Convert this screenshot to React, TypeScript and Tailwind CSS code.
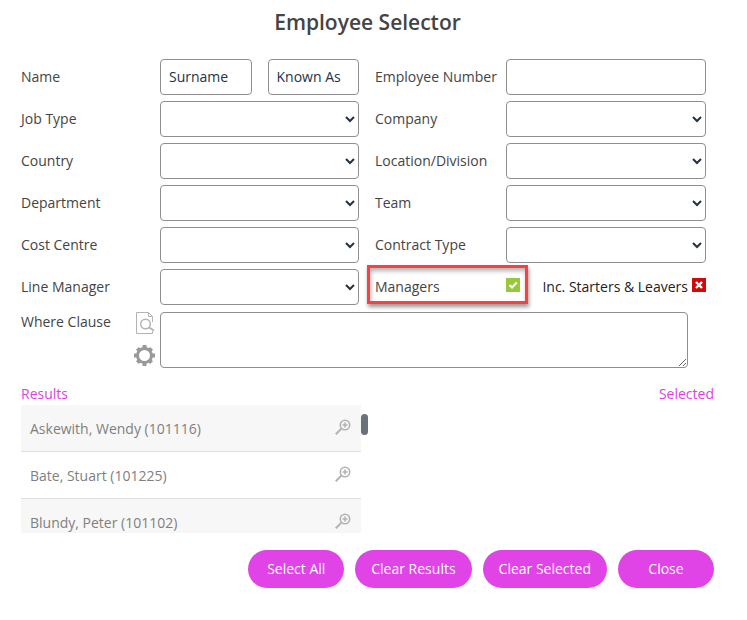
import { useState } from 'react';
import type { ReactNode } from 'react';

const FIELD = 'h-9 w-full min-w-0 rounded-[4px] border border-[#8f8f8f] bg-white text-[#26323f]';

const RESULTS = [
  'Askewith, Wendy (101116)',
  'Bate, Stuart (101225)',
  'Blundy, Peter (101102)',
];

const ACTIONS = ['Select All', 'Clear Results', 'Clear Selected', 'Close'];

function SelectField({ id, label, second }: { id: string; label: string; second?: boolean }) {
  return (
    <>
      <label htmlFor={id} className={second ? 'pl-4' : ''}>
        {label}
      </label>
      <select id={id} className={`${FIELD} px-[2px] pb-[2px]`}>
        <option value=""></option>
      </select>
    </>
  );
}

function Toggle({
  id,
  checked,
  onChange,
  className,
  children,
}: {
  id: string;
  checked: boolean;
  onChange: (value: boolean) => void;
  className: string;
  children: ReactNode;
}) {
  return (
    <span className="relative mb-1 flex size-[14px] shrink-0">
      <input
        id={id}
        type="checkbox"
        checked={checked}
        onChange={(e) => onChange(e.target.checked)}
        className={`size-[14px] appearance-none ${className}`}
      />
      <svg
        viewBox="0 0 14 14"
        className="pointer-events-none absolute inset-0 size-[14px]"
        fill="none"
        stroke="#fff"
        strokeWidth="2"
      >
        {children}
      </svg>
    </span>
  );
}

function DocumentSearchIcon() {
  return (
    <svg viewBox="0 0 20 22" className="h-[22px] w-5" fill="none" stroke="#b4b4b4">
      <path d="M12.5 .5H.5v21h16V19M12.5 .5l4 4V10M12.5 .5v4h4" />
      <circle cx="9.5" cy="12" r="4.8" strokeWidth="1.5" />
      <path d="M13 15.5l5 3" strokeWidth="2" />
    </svg>
  );
}

function GearIcon() {
  return (
    <svg viewBox="0 0 22 22" className="size-[22px]" fill="none" stroke="#999">
      <circle cx="10.5" cy="10.5" r="7" strokeWidth="3" />
      <g strokeWidth="4">
        <path d="M10.5 0v3.5M10.5 17.5V21M0 10.5h3.5M17.5 10.5H21" />
        <path d="M3.4 3.4l2.3 2.3M15.3 15.3l2.3 2.3M3.4 17.6l2.3-2.3M15.3 5.7l2.3-2.3" />
      </g>
    </svg>
  );
}

function ZoomIcon() {
  return (
    <svg viewBox="0 0 16 16" className="size-4" fill="none" stroke="#b3b3b3">
      <circle cx="10" cy="6" r="4.7" strokeWidth="1.6" />
      <path d="M10 3.5v5M7.5 6h5" strokeWidth="1.6" />
      <path d="M6.4 9.6L.8 15.2" strokeWidth="2" />
    </svg>
  );
}

export default function App() {
  const [managers, setManagers] = useState(true);
  const [leavers, setLeavers] = useState(false);

  return (
    <main className="bg-white pr-[33px] pl-[21px] font-['Open_Sans',sans-serif] text-sm text-[#444]">
      <h1 className="pt-[6px] pb-[21px] text-center text-[21px] leading-8 font-semibold text-[#444]">
        Employee Selector
      </h1>

      <form onSubmit={(e) => e.preventDefault()}>
        <div className="mr-2 grid grid-cols-[139px_199fr_147px_200fr] items-center gap-y-[6px]">
          <label htmlFor="surname">Name</label>
          <div className="flex gap-4">
            <input
              id="surname"
              placeholder="Surname"
              className={`${FIELD} px-2 pb-[2px] placeholder:text-[#26323f]`}
            />
            <input
              aria-label="Known As"
              placeholder="Known As"
              className={`${FIELD} px-2 pb-[2px] placeholder:text-[#26323f]`}
            />
          </div>
          <label htmlFor="number" className="pl-4">
            Employee Number
          </label>
          <input id="number" className={`${FIELD} px-2 pb-[2px]`} />

          <SelectField id="job" label="Job Type" />
          <SelectField id="company" label="Company" second />
          <SelectField id="country" label="Country" />
          <SelectField id="location" label="Location/Division" second />
          <SelectField id="department" label="Department" />
          <SelectField id="team" label="Team" second />
          <SelectField id="cost" label="Cost Centre" />
          <SelectField id="contract" label="Contract Type" second />
          <SelectField id="manager" label="Line Manager" />

          <div className="col-span-2 flex items-center justify-between pl-4">
            <div className="relative flex w-[145px] items-center justify-between">
              <label htmlFor="managers">Managers</label>
              <Toggle
                id="managers"
                checked={managers}
                onChange={setManagers}
                className="bg-[#97c93d]"
              >
                <path d="M3.5 7l2.5 2.5 4.8-5" />
              </Toggle>
              <span className="pointer-events-none absolute -inset-x-2 -top-3 h-[39px] border-[3px] border-[#f94144] shadow-[1px_3px_4px_rgba(0,0,0,0.4),inset_1px_3px_4px_rgba(0,0,0,0.3)]" />
            </div>
            <div className="flex items-center gap-1 text-[#222]">
              <label htmlFor="leavers">Inc. Starters &amp; Leavers</label>
              <Toggle
                id="leavers"
                checked={leavers}
                onChange={setLeavers}
                className="bg-[#cf0a0a]"
              >
                <path d="M4 4l6 6M10 4l-6 6" strokeWidth="2.4" />
              </Toggle>
            </div>
          </div>
        </div>

        <div className="mt-[7px] mr-[26px] grid grid-cols-[113px_26px_1fr]">
          <label htmlFor="where">Where Clause</label>
          <div className="flex flex-col gap-[11px]">
            <button type="button" aria-label="Preview clause" className="ml-[2px]">
              <DocumentSearchIcon />
            </button>
            <button type="button" aria-label="Clause settings">
              <GearIcon />
            </button>
          </div>
          <textarea id="where" className={`${FIELD} block h-14 p-2`} />
        </div>

        <div className="mt-4 flex justify-between text-[#de3fe3]">
          <h2>Results</h2>
          <h2>Selected</h2>
        </div>

        <div className="mt-px grid grid-cols-2">
          <div className="flex">
            <ul className="h-32 flex-1 overflow-hidden text-[#808080]">
              {RESULTS.map((name) => (
                <li
                  key={name}
                  className="flex h-[47px] items-center justify-between border-b border-[#e0e0e0] pt-[2px] pr-[10px] pl-[9px] odd:bg-[#f7f7f7]"
                >
                  {name}
                  <button type="button" aria-label={`View ${name}`} className="mb-1">
                    <ZoomIcon />
                  </button>
                </li>
              ))}
            </ul>
            <div className="mt-[9px] h-[21px] w-[7px] rounded-full bg-[#6a7178]" />
          </div>
          <div />
        </div>

        <div className="mt-[17px] flex justify-end gap-[11px]">
          {ACTIONS.map((action) => (
            <button
              key={action}
              type="button"
              className="h-[38px] min-w-24 rounded-full bg-[#e043e6] px-4 font-medium text-white"
            >
              {action}
            </button>
          ))}
        </div>
      </form>
    </main>
  );
}
